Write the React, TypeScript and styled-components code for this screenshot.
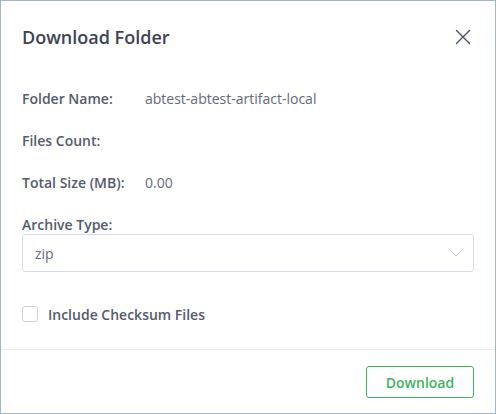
import styled, { createGlobalStyle } from 'styled-components';

const GlobalStyle = createGlobalStyle`
  html, body {
    margin: 0;
    padding: 0;
    background: #ffffff;
  }
  * {
    box-sizing: border-box;
  }
`;

const info = [
  { label: 'Folder Name:', value: 'abtest-abtest-artifact-local' },
  { label: 'Files Count:', value: '' },
  { label: 'Total Size (MB):', value: '0.00' },
];

export default function App() {
  return (
    <>
      <GlobalStyle />
      <Modal>
        <Header>
          <Title>Download Folder</Title>
          <CloseButton aria-label="close">
            <svg width="16" height="16" viewBox="0 0 16 16">
              <path d="M1.5 1.5 L14.5 14.5 M14.5 1.5 L1.5 14.5" stroke="#4a5163" strokeWidth="1.4" strokeLinecap="round" />
            </svg>
          </CloseButton>
        </Header>
        <Body>
          {info.map((row) => (
            <InfoRow key={row.label}>
              <Label>{row.label}</Label>
              <Value>{row.value}</Value>
            </InfoRow>
          ))}
          <FieldLabel>Archive Type:</FieldLabel>
          <Select>
            <span>zip</span>
            <svg width="12" height="7" viewBox="0 0 12 7">
              <path d="M0.5 0.5 L6 6 L11.5 0.5" fill="none" stroke="#c3c8d3" strokeWidth="1" />
            </svg>
          </Select>
          <CheckRow>
            <Box />
            <CheckLabel>Include Checksum Files</CheckLabel>
          </CheckRow>
        </Body>
        <Footer>
          <DownloadButton>Download</DownloadButton>
        </Footer>
      </Modal>
    </>
  );
}

const Modal = styled.div`
  width: 496px;
  height: 414px;
  border: 1px solid #a3b6c4;
  background: #fff;
  display: flex;
  flex-direction: column;
  font-family: 'Open Sans', 'Noto Sans', sans-serif;
`;

const Header = styled.div`
  height: 72px;
  padding: 0 24px 0 21px;
  display: flex;
  align-items: center;
  justify-content: space-between;
`;

const Title = styled.h2`
  margin: 0;
  font-size: 18px;
  font-weight: 600;
  color: #3c4355;
`;

const CloseButton = styled.button`
  border: none;
  background: none;
  padding: 0;
  display: flex;
  cursor: pointer;
`;

const Body = styled.div`
  flex: 1;
  padding: 4px 21px 0;
  display: flex;
  flex-direction: column;
`;

const InfoRow = styled.div`
  height: 42px;
  display: flex;
  align-items: center;
`;

const Label = styled.span`
  width: 123px;
  font-size: 14px;
  font-weight: 600;
  color: #535b6d;
`;

const Value = styled.span`
  font-size: 14px;
  color: #626a7c;
`;

const FieldLabel = styled.div`
  margin-top: 13px;
  height: 18px;
  line-height: 18px;
  font-size: 14px;
  font-weight: 600;
  color: #535b6d;
`;

const Select = styled.div`
  height: 38px;
  border: 1px solid #d7dce6;
  border-radius: 3px;
  padding: 0 11px 0 12px;
  display: flex;
  align-items: center;
  justify-content: space-between;
  font-size: 14px;
  color: #626a7c;
`;

const CheckRow = styled.div`
  margin-top: 32px;
  height: 20px;
  display: flex;
  align-items: center;
  gap: 10px;
`;

const Box = styled.span`
  width: 16px;
  height: 16px;
  border: 1px solid #ccd1de;
  border-radius: 3px;
`;

const CheckLabel = styled.span`
  font-size: 14px;
  font-weight: 600;
  color: #535b6d;
`;

const Footer = styled.div`
  border-top: 1px solid #eceef1;
  padding: 16px 21px 15px;
  display: flex;
  justify-content: flex-end;
`;

const DownloadButton = styled.button`
  width: 108px;
  height: 32px;
  border: 1px solid #3fb45f;
  border-radius: 3px;
  background: #fff;
  color: #3fb45f;
  font-family: 'Open Sans', 'Noto Sans', sans-serif;
  font-size: 14px;
  font-weight: 600;
  cursor: pointer;
`;
